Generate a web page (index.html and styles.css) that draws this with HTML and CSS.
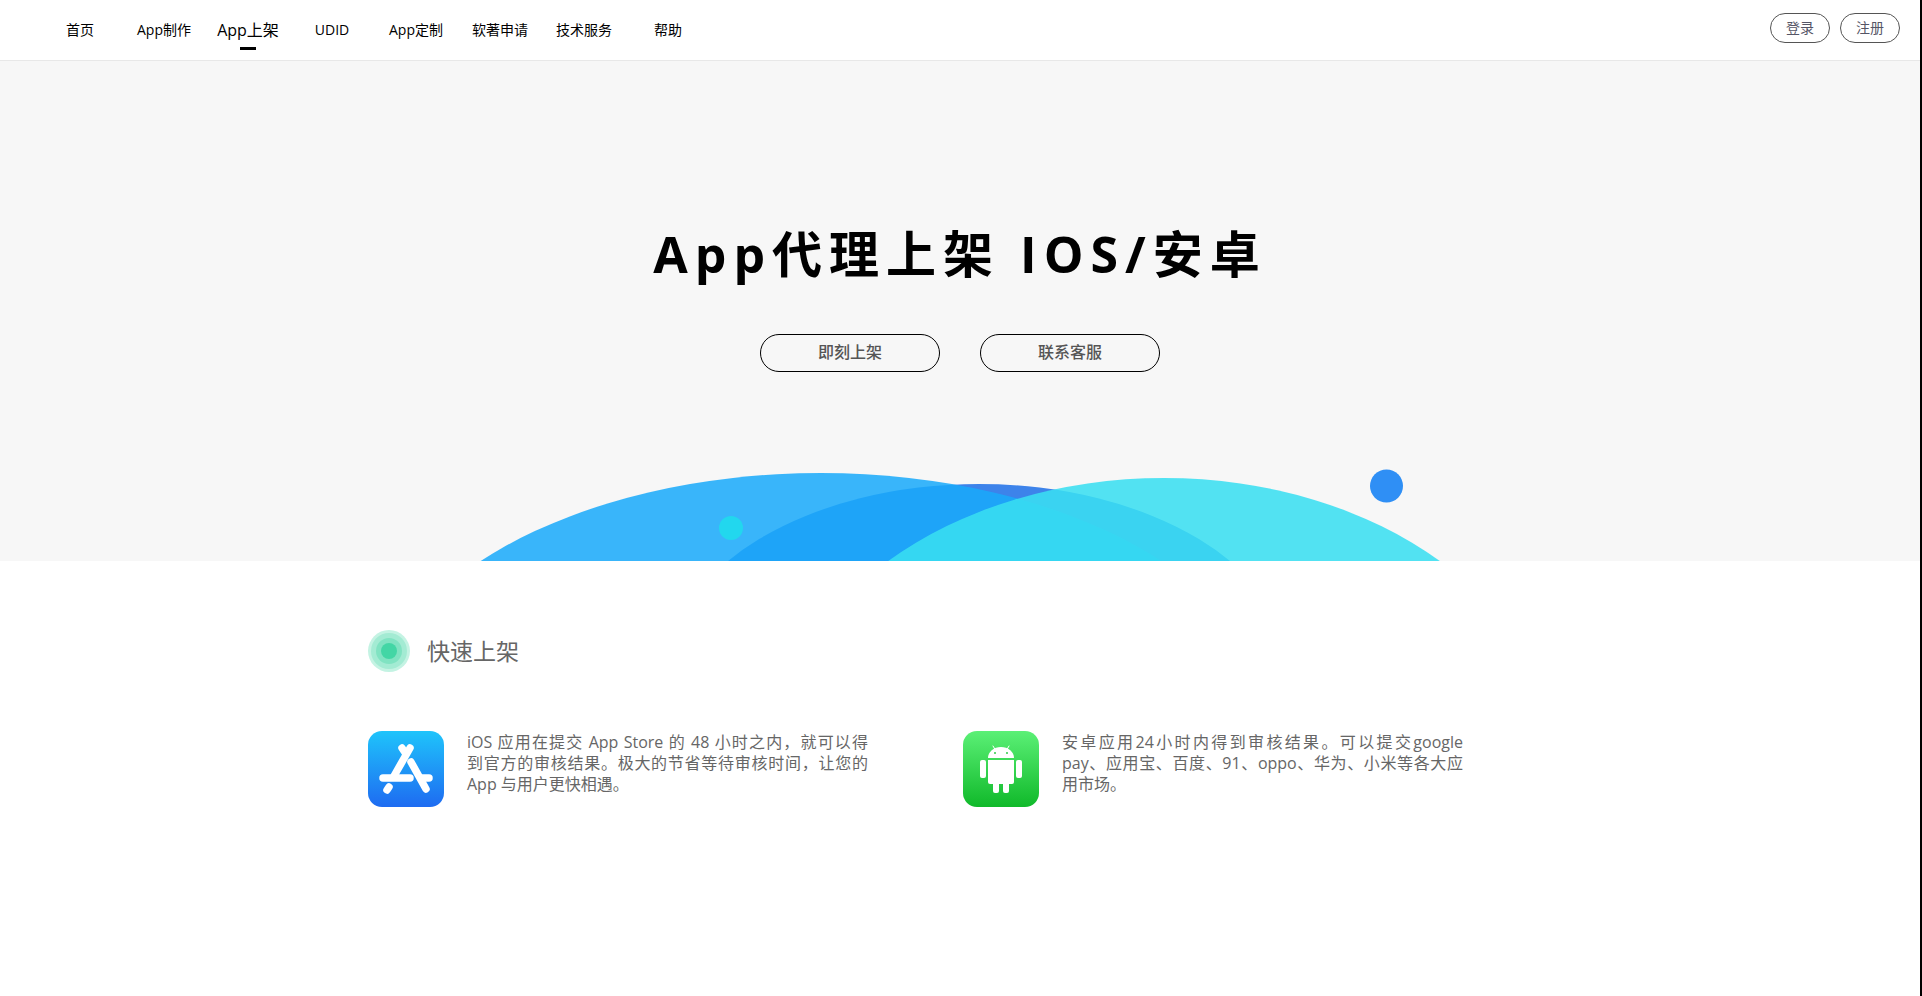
FILE: index.html
```
<!DOCTYPE html>
<html lang="zh-CN">
<head>
  <meta charset="UTF-8">
  <meta name="viewport" content="width=device-width, initial-scale=1.0">
  <title>App上架</title>
  <link rel="stylesheet" href="styles.css">
</head>
<body>
  <header class="header">
    <nav class="nav">
      <a href="#">首页</a>
      <a href="#">App制作</a>
      <a href="#" class="active">App上架</a>
      <a href="#">UDID</a>
      <a href="#">App定制</a>
      <a href="#">软著申请</a>
      <a href="#">技术服务</a>
      <a href="#">帮助</a>
    </nav>
    <div class="user">
      <button type="button">登录</button>
      <button type="button">注册</button>
    </div>
  </header>

  <section class="banner">
    <h1>App代理上架 IOS/安卓</h1>
    <div class="banner-btns">
      <button type="button">即刻上架</button>
      <button type="button">联系客服</button>
    </div>
    <svg class="waves" viewBox="0 0 960 100" width="960" height="100" aria-hidden="true">
      <ellipse cx="499" cy="211" rx="311" ry="188" fill="#3d83ea"/>
      <ellipse cx="341" cy="268" rx="451" ry="256" fill="#1aaafa" fill-opacity=".86"/>
      <ellipse cx="684" cy="302" rx="391" ry="285" fill="#39dff1" fill-opacity=".87"/>
      <circle cx="251" cy="67" r="12" fill="#22d7ee"/>
      <circle cx="906.5" cy="25" r="16.5" fill="#2f8ff5"/>
    </svg>
  </section>

  <main class="main">
    <h2>
      <svg viewBox="0 0 42 42" width="42" height="42" aria-hidden="true">
        <circle cx="21" cy="21" r="21" fill="#c4f3e3"/>
        <circle cx="21" cy="21" r="18" fill="#a3ebd3"/>
        <circle cx="21" cy="21" r="13" fill="#80e3c2"/>
        <circle cx="21" cy="21" r="8" fill="#43d6a5"/>
      </svg>
      快速上架
    </h2>
    <div class="list">
      <div class="item">
        <svg viewBox="0 0 76 76" width="76" height="76" aria-hidden="true">
          <defs>
            <linearGradient id="blue" x1="0" y1="0" x2="0" y2="1">
              <stop offset="0" stop-color="#1fc4fb"/>
              <stop offset="1" stop-color="#1e6bf1"/>
            </linearGradient>
          </defs>
          <rect width="76" height="76" rx="14" fill="url(#blue)"/>
          <g stroke="#fff" stroke-width="7.5" stroke-linecap="round" fill="none">
            <path d="M15 47H42M53 47H61"/>
            <path d="M42 17L26 45M34 17L38 23"/>
            <path d="M43 31L58 58M21 56L19 59"/>
          </g>
        </svg>
        <p>iOS 应用在提交 App Store 的 48 小时之内，就可以得到&#8288;官方的审核结果。极大的节省等待审核时间，让您的 App 与用户更快相遇。</p>
      </div>
      <div class="item">
        <svg viewBox="0 0 76 76" width="76" height="76" aria-hidden="true">
          <defs>
            <linearGradient id="green" x1="0" y1="0" x2="0" y2="1">
              <stop offset="0" stop-color="#5bf076"/>
              <stop offset="1" stop-color="#10b92a"/>
            </linearGradient>
          </defs>
          <rect width="76" height="76" rx="14" fill="url(#green)"/>
          <g fill="#fff">
            <path d="M25 27a13 11 0 0 1 26 0z"/>
            <path d="M25 29h26v22a2 2 0 0 1-2 2H27a2 2 0 0 1-2-2z"/>
            <rect x="17" y="29" width="6" height="18" rx="2"/>
            <rect x="53" y="29" width="6" height="18" rx="2"/>
            <rect x="30" y="49" width="6" height="13" rx="2"/>
            <rect x="40" y="49" width="6" height="13" rx="2"/>
          </g>
          <path d="M30 15l3 5M46 15l-3 5" stroke="#fff" stroke-linecap="round"/>
          <circle cx="32" cy="22" r="1" fill="#2fce48"/>
          <circle cx="44" cy="22" r="1" fill="#2fce48"/>
        </svg>
        <p>安卓应用24小时内得到审核结果。可以提交google pay、应用宝、百度、91、oppo、华为、小米等各大应用市场。</p>
      </div>
    </div>
  </main>
</body>
</html>
```
FILE: styles.css
```
* {
  box-sizing: border-box;
  margin: 0;
  padding: 0;
}

body {
  min-height: 100vh;
  border-right: 2px solid #000;
  background: #fff;
  color: #666;
  font-family: "Open Sans", "Noto Sans CJK SC", sans-serif;
  font-size: 16px;
}

button {
  background: none;
  font-family: inherit;
  cursor: pointer;
}

.header {
  display: flex;
  justify-content: space-between;
  height: 61px;
  padding: 0 20px 0 38px;
  border-bottom: 1px solid #e8e8e8;
}

.nav {
  display: flex;
}

.nav a {
  position: relative;
  width: 84px;
  color: #000;
  font-size: 14px;
  line-height: 60px;
  text-align: center;
  text-decoration: none;
  white-space: nowrap;
}

.nav .active {
  font-size: 16px;
}

.nav .active::after {
  content: "";
  position: absolute;
  left: 34px;
  bottom: 10px;
  width: 16px;
  height: 3px;
  background: #000;
}

.user {
  display: flex;
  gap: 10px;
  padding-top: 13px;
}

.user button {
  width: 60px;
  height: 30px;
  padding-bottom: 2px;
  border: 1px solid #555;
  border-radius: 15px;
  color: #556;
  font-size: 14px;
}

.banner {
  display: flex;
  flex-direction: column;
  align-items: center;
  height: 500px;
  padding-top: 158px;
  background: #f7f7f7;
}

.banner h1 {
  color: #000;
  font-size: 50px;
  line-height: 70px;
  letter-spacing: 7px;
}

.banner-btns {
  display: flex;
  gap: 40px;
  margin-top: 45px;
}

.banner-btns button {
  width: 180px;
  height: 38px;
  padding-bottom: 4px;
  border: 1px solid #000;
  border-radius: 19px;
  color: #555;
  font-size: 16px;
  font-weight: 500;
}

.waves {
  margin-top: auto;
}

.main {
  max-width: 1184px;
  margin: 0 auto;
  padding-top: 69px;
}

.main h2 {
  display: flex;
  align-items: center;
  gap: 17px;
  font-size: 23px;
  font-weight: 400;
  line-height: 42px;
}

.list {
  display: flex;
  gap: 95px;
  margin-top: 59px;
}

.item {
  display: flex;
  gap: 23px;
  width: 500px;
}

.item svg {
  flex: none;
}

.item p {
  padding-top: 1px;
  line-height: 21px;
  text-align: justify;
}
```
